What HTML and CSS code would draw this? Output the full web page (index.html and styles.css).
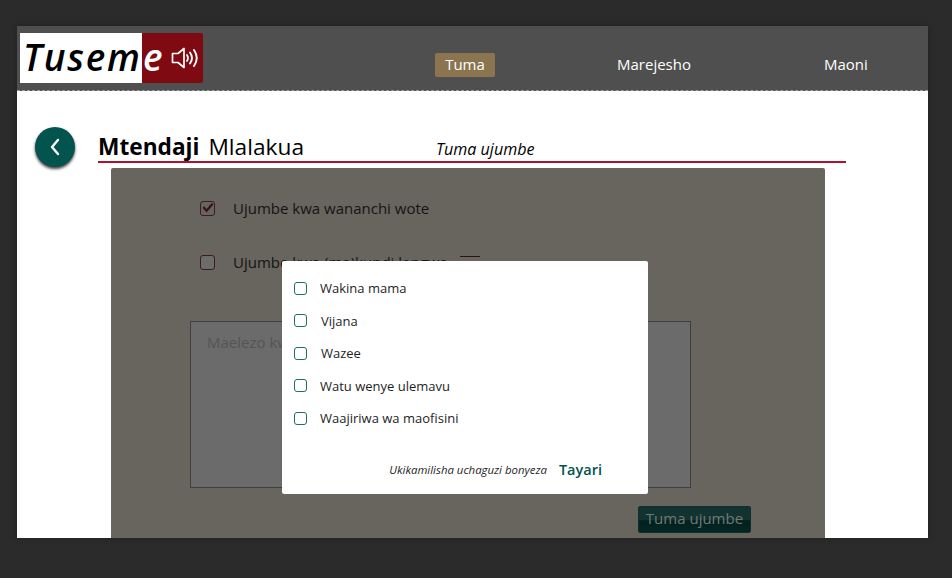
FILE: index.html
```html
<!DOCTYPE html>
<html lang="sw">
<head>
    <meta charset="UTF-8">
    <meta name="viewport" content="width=device-width, initial-scale=1.0">
    <title>Tuseme</title>
    <link rel="stylesheet" href="styles.css">
</head>
<body>
    <div class="app">
        <header class="topbar">
            <div class="logo">
                <span class="logo-white">Tusem</span>
                <span class="logo-red">
                    <span class="logo-e">e</span>
                    <svg class="logo-icon" width="28" height="22" viewBox="0 0 28 22" fill="none" stroke="#fff" stroke-width="1.700" stroke-linejoin="round" stroke-linecap="round">
                        <path d="M1.500 6.500 H7 L13 1.500 V20.500 L7 15.500 H1.500 Z"/>
                        <path d="M16 8 Q18 11 16 14"/>
                        <path d="M19 5.500 Q23 11 19 16.500" stroke-width="1.900"/>
                        <path d="M23 3 Q28.500 11 23 19" stroke-width="1.900"/>
                    </svg>
                </span>
            </div>
            <nav class="nav">
                <a class="nav-item nav-active">Tuma</a>
                <a class="nav-item nav-marejesho">Marejesho</a>
                <a class="nav-item nav-maoni">Maoni</a>
            </nav>
        </header>
        <main class="content">
            <div class="title-row">
                <button class="back-btn">
                    <svg width="12" height="18" viewBox="0 0 12 18" fill="none" stroke="#fff" stroke-width="2.400" stroke-linecap="round" stroke-linejoin="round">
                        <path d="M9 2 L3 9 L9 16"/>
                    </svg>
                </button>
                <div class="title-line">
                    <strong class="title-role">Mtendaji</strong>
                    <span class="title-name">Mlalakua</span>
                    <em class="title-page">Tuma ujumbe</em>
                </div>
            </div>
            <section class="panel">
                <div class="option option-first">
                    <span class="box-dim">
                        <svg width="14" height="12" viewBox="0 0 14 12" fill="none" stroke="#34141a" stroke-width="2.400">
                            <path d="M2.500 5 L6 9 L12.500 1.500"/>
                        </svg>
                    </span>
                    <span>Ujumbe kwa wananchi wote</span>
                </div>
                <div class="option option-second">
                    <span class="box-dim"></span>
                    <span>Ujumbe kwa (ma)kundi lengwa</span>
                    <span class="group-toggle"></span>
                </div>
                <div class="message">Maelezo kwa ufupi</div>
                <div class="send-row">
                    <button class="send-btn">Tuma ujumbe</button>
                </div>
                <div class="modal">
                    <label class="modal-row"><span class="box"></span>Wakina mama</label>
                    <label class="modal-row"><span class="box"></span><span class="nudge">Vijana</span></label>
                    <label class="modal-row"><span class="box"></span><span class="nudge">Wazee</span></label>
                    <label class="modal-row"><span class="box"></span>Watu wenye ulemavu</label>
                    <label class="modal-row"><span class="box"></span>Waajiriwa wa maofisini</label>
                    <div class="modal-foot">
                        <em class="modal-hint">Ukikamilisha uchaguzi bonyeza</em>
                        <a class="modal-done">Tayari</a>
                    </div>
                </div>
            </section>
        </main>
    </div>
</body>
</html>
```

FILE: styles.css
```css
html, body {
    height: 100%;
}
body {
    margin: 0;
    padding: 26px 24px 0 17px;
    box-sizing: border-box;
    background-color: #2b2b2b;
    font-family: "Open Sans", "Noto Sans", sans-serif;
    overflow: hidden;
}
.app {
    height: 512px;
    background-color: #fff;
    overflow: hidden;
    box-shadow: 0 0 6px rgba(0, 0, 0, 0.25);
}
.topbar {
    height: 65px;
    box-sizing: border-box;
    padding: 7px 0 0 3px;
    background-color: #4f4f4f;
    border-bottom: 1px dashed #9a9a9a;
    display: flex;
}
.logo {
    width: 183px;
    height: 50px;
    display: flex;
    font-style: italic;
    font-weight: 600;
    font-size: 37px;
    line-height: 47px;
}
.logo-white {
    width: 122px;
    box-sizing: border-box;
    padding-left: 3px;
    background-color: #fff;
    color: #000;
    letter-spacing: 1.700px;
}
.logo-red {
    width: 61px;
    display: flex;
    align-items: flex-start;
    background-color: #7f0a12;
    border-radius: 0 2px 2px 0;
    color: #fff;
}
.logo-e {
    margin-left: 1px;
    width: 28px;
}
.logo-icon {
    margin-top: 14px;
}
.nav {
    display: flex;
    align-items: flex-start;
    margin-left: 232px;
    padding-top: 20px;
    font-size: 15px;
    color: #fff;
}
.nav-item {
    height: 24px;
    line-height: 23px;
}
.nav-active {
    width: 60px;
    text-align: center;
    background-color: #8b7550;
    border-radius: 2px;
}
.nav-marejesho {
    margin-left: 122px;
}
.nav-maoni {
    margin-left: 133px;
}
.content {
    position: relative;
}
.title-row {
    display: flex;
    padding: 36px 82px 0 18px;
}
.back-btn {
    width: 40px;
    height: 40px;
    padding: 0;
    border: none;
    border-radius: 50%;
    background-color: #03534e;
    box-shadow: 0 2px 3px rgba(0, 0, 0, 0.75);
    display: flex;
    align-items: center;
    justify-content: center;
}
.title-line {
    flex: 1;
    height: 36px;
    margin-left: 23px;
    box-sizing: border-box;
    border-bottom: 2px solid #b3102f;
    display: flex;
    align-items: baseline;
    color: #000;
    line-height: 39px;
}
.title-role {
    font-size: 22.700px;
}
.title-name {
    margin-left: 9px;
    font-size: 22.700px;
}
.title-page {
    margin-left: 132px;
    font-size: 16.100px;
}
.panel {
    position: relative;
    width: 714px;
    height: 370px;
    box-sizing: border-box;
    margin: 1px 0 0 94px;
    padding-left: 79px;
    background-color: #68645e;
    border-radius: 2px 2px 0 0;
    color: #141414;
    font-size: 15px;
}
.option {
    display: flex;
    align-items: center;
    height: 22px;
}
.option-first {
    padding: 29px 0 0 10px;
}
.option-second {
    padding: 32px 0 0 10px;
}
.box-dim {
    width: 13px;
    height: 13px;
    margin-right: 18px;
    border: 1px solid #3f1a20;
    border-radius: 3px;
    display: flex;
    align-items: center;
    justify-content: center;
    background-color: #6e6b6b;
}
.option-first .box-dim {
    background-color: transparent;
}
.group-toggle {
    width: 20px;
    height: 1px;
    margin: -11px 0 0 12px;
    background-color: #2e1216;
}
.message {
    width: 501px;
    height: 167px;
    box-sizing: border-box;
    margin-top: 48px;
    padding: 10px 16px;
    border: 1px solid #3f3f3f;
    background-color: #6b6b6b;
    color: #555;
}
.send-row {
    width: 561px;
    display: flex;
    justify-content: flex-end;
    margin-top: 18px;
}
.send-btn {
    width: 113px;
    height: 27px;
    padding: 0 0 3px;
    border: 1px solid #10302e;
    border-radius: 2px;
    background: linear-gradient(#12332f 0%, #12332f 50%, #02211e 55%, #032624 100%);
    color: #6f7a78;
    font-family: inherit;
    font-size: 15px;
}
.modal {
    position: absolute;
    left: 171px;
    top: 93px;
    width: 366px;
    height: 233px;
    box-sizing: border-box;
    padding: 11px 12px 0;
    background-color: #fff;
    border-radius: 2px;
    color: #1e1e1e;
    font-size: 13px;
}
.modal-row {
    height: 32.500px;
    display: flex;
    align-items: center;
}
.box {
    width: 11px;
    height: 11px;
    margin-right: 13px;
    border: 1px solid #1f6f69;
    border-radius: 3px;
}
.nudge {
    margin-left: 1px;
}
.modal-foot {
    display: flex;
    align-items: center;
    justify-content: flex-end;
    margin-top: 25px;
    padding-right: 34px;
}
.modal-hint {
    font-size: 11.400px;
}
.modal-done {
    margin-left: 12px;
    color: #03534e;
    font-size: 14.500px;
    font-weight: 600;
}
```
